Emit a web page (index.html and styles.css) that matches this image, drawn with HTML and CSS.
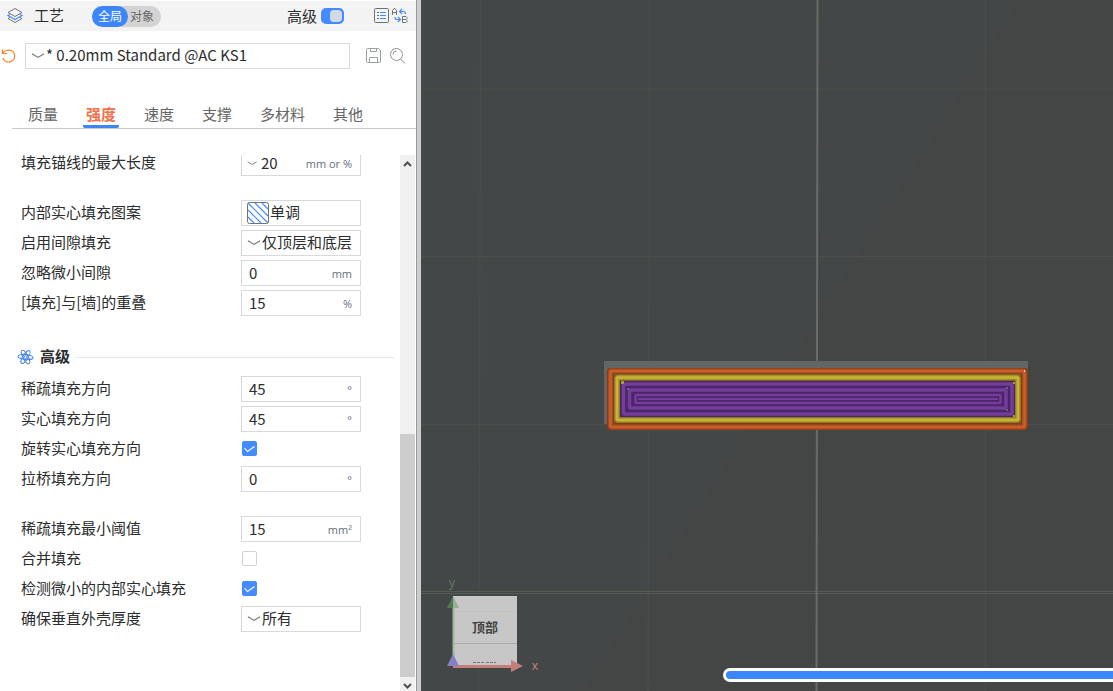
FILE: index.html
```html
<!DOCTYPE html>
<html lang="zh-CN">
<head>
<meta charset="utf-8">
<meta name="viewport" content="width=device-width, initial-scale=1">
<title>工艺</title>
<link rel="stylesheet" href="styles.css">
</head>
<body>
<svg class="defs" aria-hidden="true">
  <symbol id="chevron" viewBox="0 0 16 16"><path d="M1 5.500L7.500 9.500L14 5.500" fill="none" stroke="#737878" stroke-width="1.300"/></symbol>
  <symbol id="tick" viewBox="0 0 15 15"><path d="M2.500 7L5.500 10.500L12.500 5.500" fill="none" stroke="#fff" stroke-width="1.100"/></symbol>
</svg>
<aside class="sidebar">
  <header class="topbar">
    <svg class="icon-layers" viewBox="0 0 18 18" fill="none" stroke-width="1"><path d="M9 1.500L16 5.500L9 9.500L2 5.500Z" stroke="#707777"/><path d="M4 7.500L2 8.500L9 12.500L16 8.500L14 7.500" stroke="#438cff" stroke-width="1.200"/><path d="M4 10.500L2 11.500L9 15.500L16 11.500L14 10.500" stroke="#707777"/></svg>
    <h1 class="title">工艺</h1>
    <div class="segmented">
      <button type="button" class="segment segment-active">全局</button>
      <button type="button" class="segment">对象</button>
    </div>
    <label class="advanced">高级<input class="switch" type="checkbox" role="switch" checked></label>
    <div class="top-icons">
      <button type="button" class="icon-button" aria-label="参数列表"><svg width="16" height="16" viewBox="0 0 16 16" fill="none"><rect x=".5" y=".5" width="14" height="14" rx="1" stroke="#6c7474"/><path d="M3 4.500H5M3 7.500H5M3 10.500H5" stroke="#6c7474"/><path d="M6 4.500H12M6 7.500H12M6 10.500H12" stroke="#438cff"/></svg></button>
      <button type="button" class="icon-button" aria-label="比较预设"><svg width="16" height="16" viewBox="0 0 16 16" fill="none"><path d="M.5 7V2.500L2 .5H3L4.500 2.500V7M.5 4.500H4.500M10.500 8.500V14.500H14L15 13.500V12.500L14 11.500H10.500M10.500 8.500H14L15 9.500V10.500L14 11.500" stroke="#6c7474"/><path d="M8 3.500H11Q13.500 3.500 13.500 6M10 1L7.500 3.500L10 6M3 9Q3 11.500 5 11.500H8M6 9L8.500 11.500L6 14" stroke="#438cff" stroke-width="1.200"/></svg></button>
    </div>
  </header>
  <div class="preset">
    <button type="button" class="icon-button" aria-label="重置"><svg width="17" height="16" viewBox="0 0 17 16" fill="none" stroke="#f57b20" stroke-width="1.200"><path d="M2.500 1.500V5.500H7M2.500 5.500Q5 2 9 2A6 6 0 1 1 3 10"/></svg></button>
    <div class="field preset-field">
      <svg class="chevron"><use href="#chevron"/></svg>
      <select class="control" aria-label="预设"><option>* 0.20mm Standard @AC KS1</option></select>
    </div>
    <div class="preset-icons">
      <button type="button" class="icon-button" aria-label="保存"><svg width="16" height="16" viewBox="0 0 16 16" fill="none" stroke="#9a9f9f"><path d="M.5 1.500Q.5.500 1.500.500H12.500L14.500 2.500V13.500Q14.500 14.500 13.500 14.500H1.500Q.5 14.500.500 13.500ZM4.500.500V3.500H10.500V.500M3.500 14V9.500H11.500V14"/></svg></button>
      <button type="button" class="icon-button" aria-label="搜索"><svg width="16" height="16" viewBox="0 0 16 16" fill="none" stroke="#8d9292"><circle cx="6.500" cy="6.500" r="6"/><path d="M10.500 11L15 15.500M3 6.500A3.500 3.500 0 0 1 6.500 3"/></svg></button>
    </div>
  </div>
  <nav class="tabs">
    <button type="button" class="tab">质量</button>
    <button type="button" class="tab tab-active">强度</button>
    <button type="button" class="tab">速度</button>
    <button type="button" class="tab">支撑</button>
    <button type="button" class="tab">多材料</button>
    <button type="button" class="tab">其他</button>
  </nav>
  <div class="scroll-area">
    <main class="settings">
      <section class="group">
        <div class="row"><label for="anchor">填充锚线的最大长度</label><div class="field field-scrolled"><svg class="chevron chevron-small"><use href="#chevron"/></svg><input class="control" id="anchor" value="20"><span class="unit">mm or %</span></div></div>
      </section>
      <section class="group">
        <div class="row"><label for="pattern">内部实心填充图案</label><div class="field"><svg class="hatch" viewBox="0 0 22 22" fill="none"><path d="M1 15L7 21M1 8L14 21M1 1L21 21M8 1L21 14M15 1L21 7" stroke="#438cff" stroke-width="1.200"/><rect x=".5" y=".5" width="21" height="21" rx="2" stroke="#6c7474"/></svg><select class="control" id="pattern"><option>单调</option></select></div></div>
        <div class="row"><label for="gap">启用间隙填充</label><div class="field"><svg class="chevron"><use href="#chevron"/></svg><select class="control" id="gap"><option>仅顶层和底层</option></select></div></div>
        <div class="row"><label for="tiny">忽略微小间隙</label><div class="field"><input class="control" id="tiny" value="0"><span class="unit">mm</span></div></div>
        <div class="row"><label for="overlap">[填充]与[墙]的重叠</label><div class="field"><input class="control" id="overlap" value="15"><span class="unit">%</span></div></div>
      </section>
      <h2 class="section-title"><svg width="17" height="16" viewBox="0 0 17 16" fill="none"><ellipse cx="8.500" cy="8" rx="7.500" ry="2.500" stroke="#438cff" stroke-width="1.200" transform="rotate(5 8.500 8)"/><ellipse cx="8.500" cy="8" rx="7.500" ry="2.500" stroke="#707b88" transform="rotate(62 8.500 8)"/><ellipse cx="8.500" cy="8" rx="7.500" ry="2.500" stroke="#438cff" stroke-width="1.200" transform="rotate(122 8.500 8)"/><circle cx="8.500" cy="8" r="1.500" fill="#fff" stroke="#438cff"/></svg><span>高级</span></h2>
      <section class="group">
        <div class="row"><label for="sparse">稀疏填充方向</label><div class="field"><input class="control" id="sparse" value="45"><span class="unit">°</span></div></div>
        <div class="row"><label for="solid">实心填充方向</label><div class="field"><input class="control" id="solid" value="45"><span class="unit">°</span></div></div>
        <div class="row"><label for="rotate">旋转实心填充方向</label><div class="check"><input type="checkbox" id="rotate" checked><svg><use href="#tick"/></svg></div></div>
        <div class="row"><label for="bridge">拉桥填充方向</label><div class="field"><input class="control" id="bridge" value="0"><span class="unit">°</span></div></div>
      </section>
      <section class="group">
        <div class="row"><label for="threshold">稀疏填充最小阈值</label><div class="field"><input class="control" id="threshold" value="15"><span class="unit">mm²</span></div></div>
        <div class="row"><label for="merge">合并填充</label><div class="check"><input type="checkbox" id="merge"><svg><use href="#tick"/></svg></div></div>
        <div class="row"><label for="detect">检测微小的内部实心填充</label><div class="check"><input type="checkbox" id="detect" checked><svg><use href="#tick"/></svg></div></div>
        <div class="row"><label for="shell">确保垂直外壳厚度</label><div class="field"><svg class="chevron"><use href="#chevron"/></svg><select class="control" id="shell"><option>所有</option></select></div></div>
      </section>
    </main>
    <div class="scrollbar">
      <button type="button" class="scroll-button" aria-label="向上"><svg width="9" height="8" viewBox="0 0 9 8"><path d="M1 6L4.500 2.500L8 6" fill="none" stroke="#505050" stroke-width="2"/></svg></button>
      <div class="scroll-space"></div>
      <div class="scroll-thumb"></div>
      <button type="button" class="scroll-button" aria-label="向下"><svg width="9" height="8" viewBox="0 0 9 8"><path d="M1 2L4.500 5.500L8 2" fill="none" stroke="#505050" stroke-width="2"/></svg></button>
    </div>
  </div>
</aside>
<div class="splitter"></div>
<section class="viewport" aria-label="预览">
  <svg class="scene" viewBox="421 0 692 691" preserveAspectRatio="xMinYMin slice">
    <rect x="421" width="692" height="691" fill="#434747"/>
    <path d="M1020 0H1113V691H584Z" fill="#444645"/>
    <path d="M421 89H1113M421 256.500H1113M421 424.500H1113" stroke="#4a504a"/>
    <path d="M480.500 0L479 691M649.500 0L648 691M985.500 0V691" stroke="#4a4f4b"/>
    <path d="M421 591.500H1113M421 593.500H1113" stroke="#535c53"/>
    <path d="M817.500 0L816.500 691" stroke="#696c66" stroke-width="2"/>
    <rect x="604" y="361" width="424" height="63" fill="#626665"/>
    <g fill="none" stroke-linejoin="bevel">
      <rect x="607" y="368" width="421" height="62" rx="3" fill="#853c18"/>
      <rect x="610.500" y="371" width="414" height="56" stroke="#a94a1e" stroke-width="5"/>
      <rect x="610.500" y="371" width="414" height="56" stroke="#c75f2a" stroke-width="2.500"/>
      <rect x="614" y="374" width="407" height="49" fill="#74661c"/>
      <rect x="617" y="377.500" width="401" height="42.500" stroke="#a5922a" stroke-width="5"/>
      <rect x="617" y="377.500" width="401" height="42.500" stroke="#c9b336" stroke-width="2.500"/>
      <rect x="620" y="381" width="395" height="36" fill="#4a2666"/>
      <g stroke="#743c9b" stroke-width="3.500">
        <rect x="623.500" y="384" width="388.500" height="30"/>
        <rect x="629.500" y="390" width="376.500" height="18"/>
        <rect x="635.500" y="395" width="365" height="8" stroke-width="2.500"/>
      </g>
      <path d="M638 399H998" stroke="#743c9b" stroke-width="2"/>
      <path d="M621 381h3v3h-3z" fill="#a99b30"/>
      <path d="M627 388h2v2h-2zM1006 387h2v2h-2zM1006 409h2v2h-2z" fill="#6a6675"/>
      <path d="M1013 382h2v2h-2zM1013 415h2v2h-2z" fill="#a99b30"/>
      <path d="M1024.500 370V372" stroke="#ddd"/>
    </g>
    <rect x="453" y="596" width="64" height="70" fill="#c7c7c7"/>
    <path d="M453 611.500H517" stroke="#c0c0c0"/>
    <path d="M453 643.500H517" stroke="#acacac"/>
    <path d="M473 662.500H484M486 662.500H496" stroke="#777" stroke-dasharray="3 1"/>
    <text class="cube-label" x="485" y="632">顶部</text>
    <path d="M453.500 663V605" stroke="#9dbb9d" stroke-width="2"/>
    <path d="M447 608L453 596V608Z" fill="#567456"/>
    <path d="M453 608V596L459 608Z" fill="#94b094"/>
    <path d="M453 666.500H512" stroke="#c47f7d" stroke-width="3"/>
    <path d="M511 660V672L523 666Z" fill="#c47f7d"/>
    <path d="M447 666L453 654L459 666Z" fill="#8381c3"/>
    <text class="axis-y" x="452" y="587">y</text>
    <text class="axis-x" x="535" y="670">x</text>
  </svg>
  <input class="timeline" type="range" aria-label="步骤" value="100">
</section>
</body>
</html>
```
FILE: styles.css
```css
* { box-sizing: border-box; }
body {
  margin: 0;
  display: flex;
  height: 100vh;
  overflow: hidden;
  background: #fff;
  color: #2b2d2e;
  font: 15px/20px "Noto Sans CJK SC", sans-serif;
}
button, input, select { font: inherit; color: inherit; margin: 0; padding: 0; border: 0; background: none; }
svg { display: block; flex: none; }
.defs { position: absolute; width: 0; height: 0; }
.sidebar { flex: 0 0 416px; display: flex; flex-direction: column; min-height: 0; }
.splitter { flex: 0 0 5px; background: #cdcdcd; border-left: 1px solid #999; }

.topbar { display: flex; align-items: center; height: 30px; margin-top: 1px; padding: 0 8px 0 6px; background: #f3f3f3; }
.icon-layers { width: 18px; height: 18px; }
.title { margin: 0 0 0 10px; padding-bottom: 2px; font-size: 15px; font-weight: 400; }
.segmented { display: flex; margin-left: 28px; border-radius: 11px; background: #d3d3d3; }
.segment { height: 21px; padding: 0 7px 0 2px; border-radius: 11px; font-size: 12px; line-height: 20px; color: #666; }
.segment-active { padding: 0 6px; background: #3b86fb; color: #fff; }
.advanced { display: flex; align-items: center; gap: 4px; margin-left: auto; line-height: 22px; }
.switch { appearance: none; width: 23px; height: 16px; border: 2px solid #438cff; border-radius: 5px; background: #438cff; }
.switch::after { content: ""; display: block; width: 12px; height: 12px; margin-left: 7px; border-radius: 4px; background: #d2d9e7; }
.top-icons { display: flex; gap: 2px; margin-left: 30px; }
.icon-button { display: flex; align-items: center; }

.preset { display: flex; align-items: center; gap: 8px; padding: 12px 10px 0 0; }
.field { display: flex; align-items: center; width: 120px; height: 26px; padding: 0 8px 0 5px; border: 1px solid #d9d9d9; background: #fff; }
.preset-field { flex: 1; width: auto; }
.field-scrolled { clip-path: inset(5px 0 0 0); }
.chevron { width: 15px; height: 16px; }
.chevron-small { width: 11px; height: 11px; margin-right: 3px; }
.control { flex: 1; min-width: 0; height: 22px; padding-bottom: 2px; appearance: none; outline: 0; }
.field > input.control:first-child { padding-left: 2px; }
.preset-icons { display: flex; gap: 8px; margin-left: 8px; }

.tabs { display: flex; gap: 22px; margin: 34px 0 0 12px; padding-left: 13px; border-bottom: 1px solid #c9c9c9; }
.tab { height: 25px; padding: 0 3px; border-bottom: 3px solid transparent; color: #666; line-height: 20px; }
.tab-active { border-color: #3b86fb; border-radius: 2px; color: #f0714c; font-weight: 700; }

.scroll-area { flex: 1; display: flex; min-height: 0; margin-top: 21px; padding-right: 1px; overflow: hidden; }
.settings { flex: 1; }
.group { display: flex; flex-direction: column; gap: 4px; margin-bottom: 24px; padding-left: 21px; }
.row { display: grid; grid-template-columns: 220px 120px; align-items: center; height: 26px; }
.row label { padding-bottom: 2px; }
.unit { padding-top: 2px; color: #686e80; font-family: "Open Sans", sans-serif; font-size: 11px; }
.hatch { width: 22px; height: 22px; margin-right: 1px; }
.section-title { display: flex; align-items: center; gap: 6px; height: 20px; margin: 31px 6px 9px 17px; font-size: 15px; font-weight: 700; }
.section-title span { padding-bottom: 2px; }
.section-title::after { content: ""; flex: 1; height: 1px; background: #e9e9e9; }
.check { display: grid; width: 15px; height: 15px; margin: 0 0 1px 1px; }
.check > * { grid-area: 1 / 1; width: 15px; height: 15px; }
.check input { appearance: none; border: 1px solid #d2d2d2; border-radius: 2px; }
.check input:checked { border-color: #438cff; background: #438cff; }
.check input:not(:checked) + svg { visibility: hidden; }
.check svg { pointer-events: none; }

.scrollbar { display: flex; flex-direction: column; width: 15px; margin: 5px 0 -3px; background: #f0f0f0; }
.scroll-button { display: grid; place-items: center; flex: 0 0 17px; }
.scroll-space { flex: 262; }
.scroll-thumb { flex: 243; background: #cdcdcd; }

.viewport { flex: 1; position: relative; min-width: 0; overflow: hidden; background: #434747; }
.scene { width: 100%; height: 100%; }
.cube-label { font-size: 13px; font-weight: 700; text-anchor: middle; fill: #444; }
.axis-y, .axis-x { font-family: "Noto Sans", sans-serif; font-size: 12px; text-anchor: middle; fill: #627a62; }
.axis-x { fill: #c47f7d; }
.timeline { position: absolute; right: -16px; bottom: 9px; left: 302px; height: 14px; appearance: none; border: 3px solid #fff; border-radius: 7px; background: #3b86fb; }
.timeline::-webkit-slider-thumb { appearance: none; width: 8px; height: 8px; }
```
